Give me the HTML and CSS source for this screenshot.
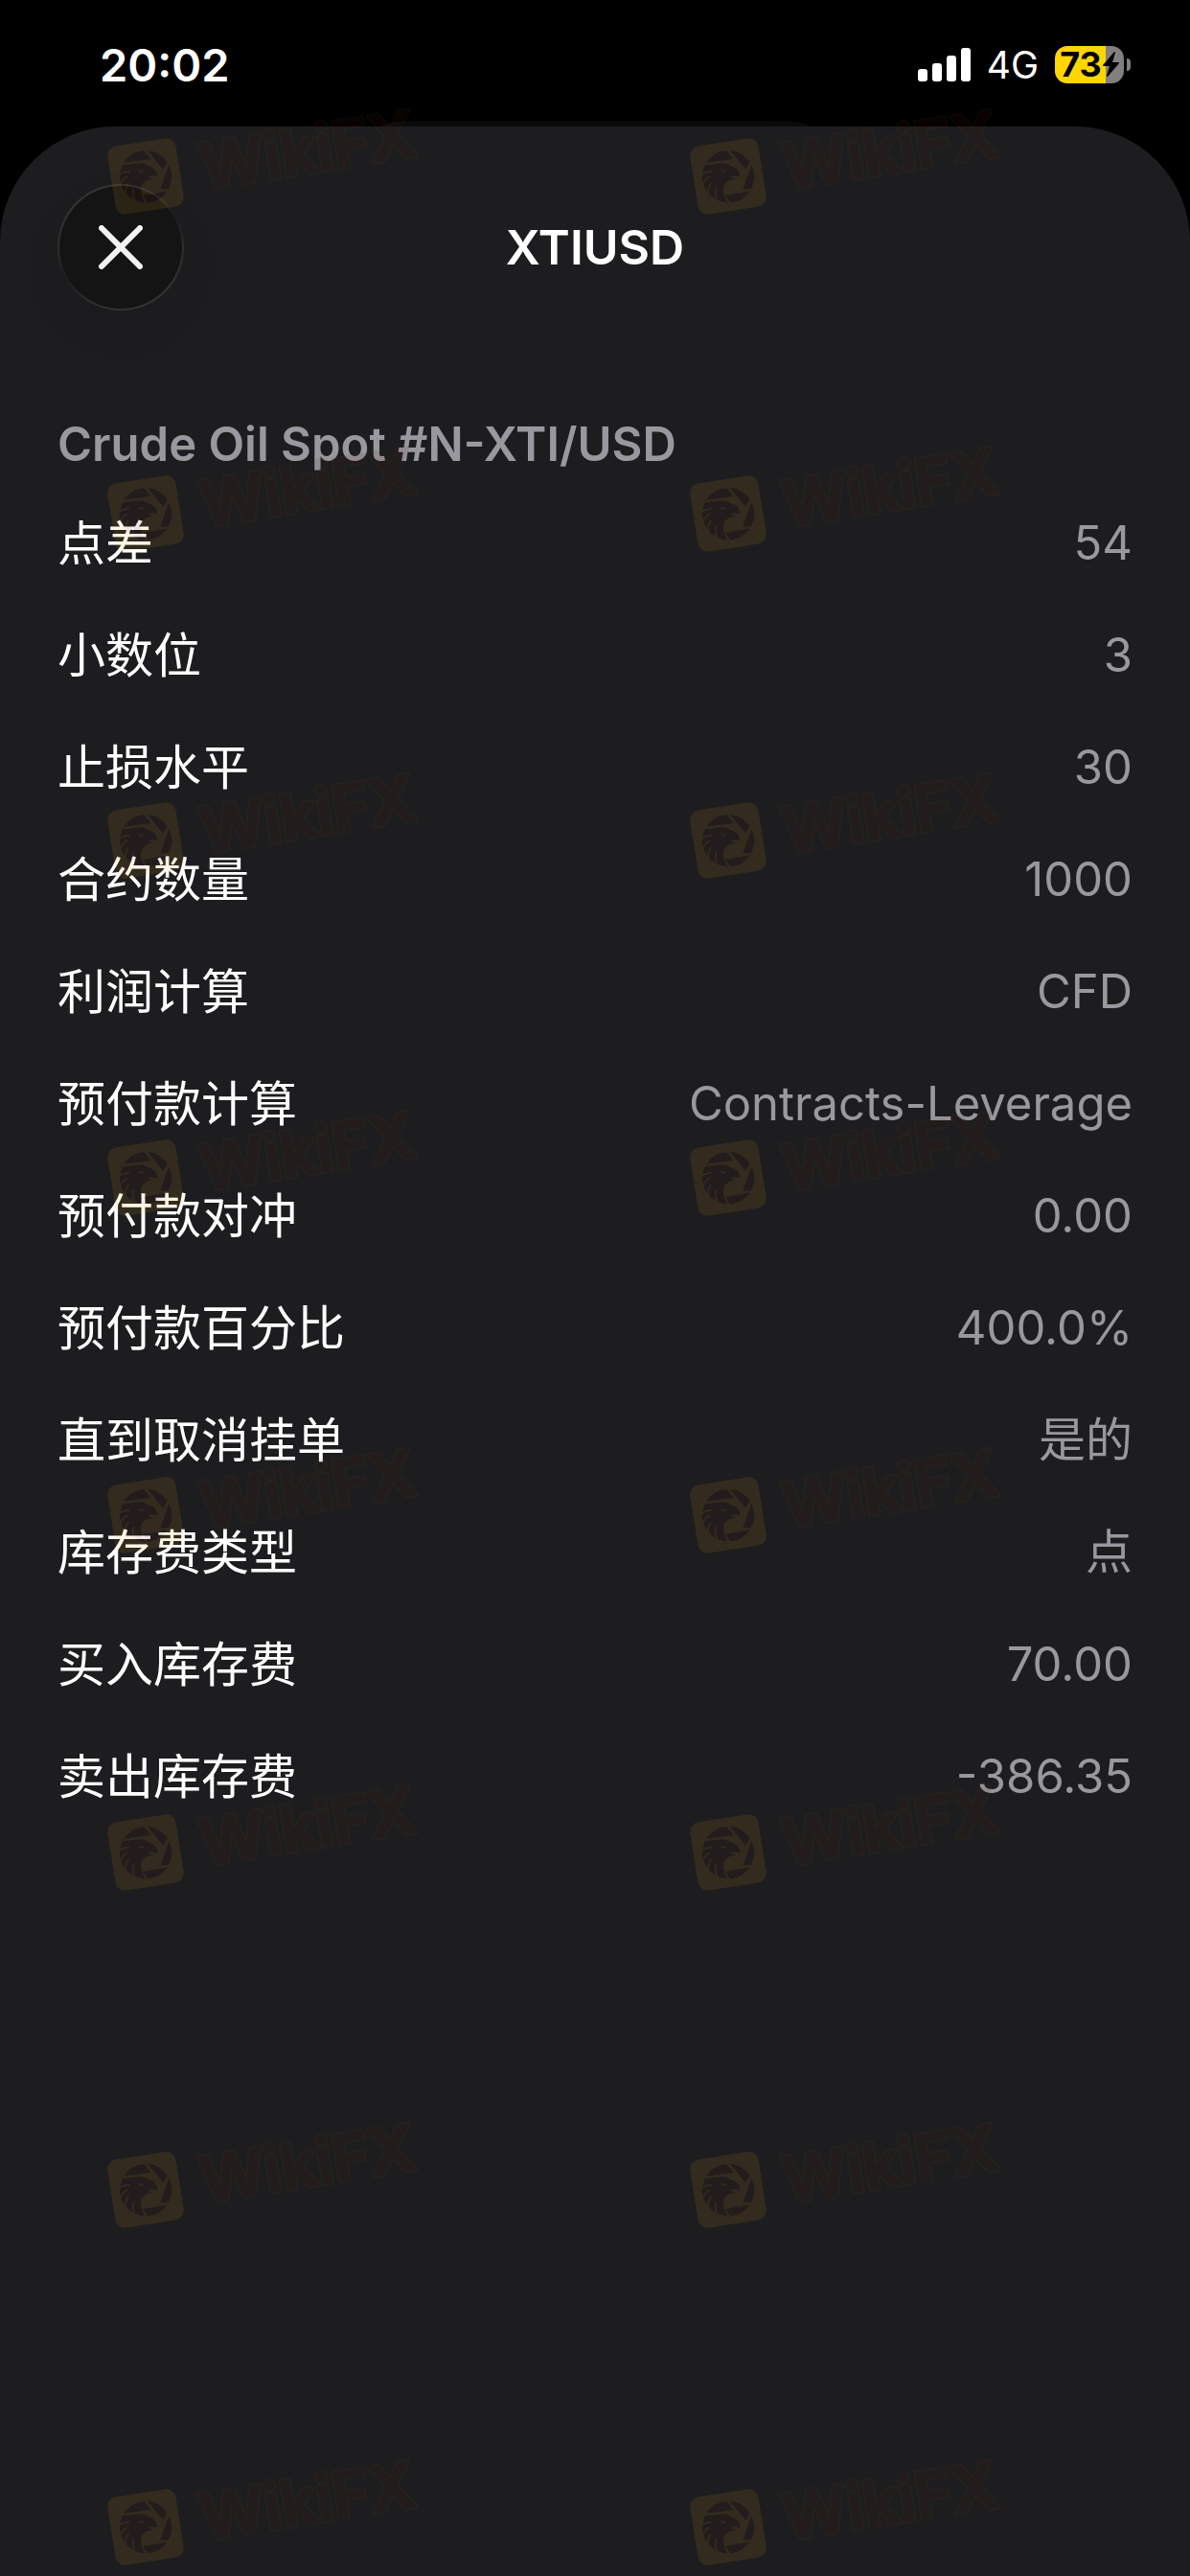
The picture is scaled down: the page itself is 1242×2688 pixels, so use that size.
FILE: index.html
```
<!DOCTYPE html>
<html lang="zh-CN">
<head>
    <meta charset="UTF-8">
    <meta name="viewport" content="width=device-width, initial-scale=1.0">
    <title>XTIUSD</title>
    <link rel="stylesheet" href="styles.css">
</head>
<body>
    <header class="status-bar">
        <span class="time">20:02</span>
        <div class="status-icons">
            <svg class="signal" viewBox="0 0 55 35" aria-hidden="true">
                <rect x="0" y="22" width="10" height="13" rx="3"/>
                <rect x="15" y="16" width="10" height="19" rx="3"/>
                <rect x="30" y="8" width="10" height="27" rx="3"/>
                <rect x="45" y="0" width="10" height="35" rx="3"/>
            </svg>
            <span class="network">4G</span>
            <div class="battery">
                <div class="battery-body">
                    <span>73</span>
                    <svg class="bolt" viewBox="0 0 17 26" aria-hidden="true">
                        <path d="M12 0 L0 14 Q0 15 1 15 H7 L4 25 Q4 26 5 26 L17 12 Q17 11 16 11 H10 L13 1 Q13 0 12 0 Z"/>
                    </svg>
                </div>
                <div class="battery-cap"></div>
            </div>
        </div>
    </header>

    <main class="sheet">
        <div class="sheet-header">
            <button class="close-button" type="button" aria-label="关闭">
                <svg viewBox="0 0 46 46" aria-hidden="true">
                    <path d="M3 3 L43 43 M43 3 L3 43"/>
                </svg>
            </button>
            <h1>XTIUSD</h1>
        </div>

        <h2>Crude Oil Spot #N-XTI/USD</h2>
        <dl class="specs">
            <div class="row"><dt>点差</dt><dd>54</dd></div>
            <div class="row"><dt>小数位</dt><dd>3</dd></div>
            <div class="row"><dt>止损水平</dt><dd>30</dd></div>
            <div class="row"><dt>合约数量</dt><dd>1000</dd></div>
            <div class="row"><dt>利润计算</dt><dd>CFD</dd></div>
            <div class="row"><dt>预付款计算</dt><dd>Contracts-Leverage</dd></div>
            <div class="row"><dt>预付款对冲</dt><dd>0.00</dd></div>
            <div class="row"><dt>预付款百分比</dt><dd>400.0%</dd></div>
            <div class="row"><dt>直到取消挂单</dt><dd>是的</dd></div>
            <div class="row"><dt>库存费类型</dt><dd>点</dd></div>
            <div class="row"><dt>买入库存费</dt><dd>70.00</dd></div>
            <div class="row"><dt>卖出库存费</dt><dd>-386.35</dd></div>
        </dl>
    </main>

    <!-- watermark, the first mark is reused by the others -->
    <div class="watermark" aria-hidden="true">
        <div class="mark-grid">
            <svg viewBox="-50 -100 352 150">
                <g id="mark">
                    <g transform="rotate(-9)">
                        <rect class="mark-tile" x="-36" y="-36" width="72" height="72" rx="10"/>
                        <g class="mark-outline"><text id="mark-text" x="58" y="23">WikiFX</text></g>
                        <use class="mark-text" href="#mark-text"/>
                    </g>
                    <g class="mark-bird" transform="translate(-47 -49) scale(0.333)">
                        <path d="M73 104 A82 82 0 0 1 136 66 L158 93 Z"/>
                        <path d="M147 66 A82 82 0 0 1 209 102 L196 125 Z"/>
                        <path d="M214 111 A82 82 0 0 1 213 187 L187 188 Z"/>
                        <path d="M132 207 L209 194 A82 82 0 0 1 148 230 Z"/>
                        <path d="M68 112 L125 106 Q142 107 148 115 Q170 118 177 138 L178 150 Q168 144 148 147 Q158 154 167 156 Q150 156 141 162 Q126 171 126 190 Q127 208 139 230 Q122 228 113 224 A82 82 0 0 1 60 138 Z"/>
                        <path class="mark-line" d="M58 142 Q72 132 90 132 M62 172 Q70 154 84 148 M78 202 Q77 180 88 168 M106 222 Q98 200 104 184"/>
                        <path class="mark-eye" d="M116 127 L136 129 Q126 140 116 127 Z"/>
                    </g>
                </g>
            </svg>
            <svg viewBox="-50 -100 352 150"><use href="#mark"/></svg>
            <svg viewBox="-50 -100 352 150"><use href="#mark"/></svg>
            <svg viewBox="-50 -100 352 150"><use href="#mark"/></svg>
        </div>
        <div class="mark-grid">
            <svg viewBox="-50 -100 352 150"><use href="#mark"/></svg>
            <svg viewBox="-50 -100 352 150"><use href="#mark"/></svg>
            <svg viewBox="-50 -100 352 150"><use href="#mark"/></svg>
            <svg viewBox="-50 -100 352 150"><use href="#mark"/></svg>
            <svg viewBox="-50 -100 352 150"><use href="#mark"/></svg>
            <svg viewBox="-50 -100 352 150"><use href="#mark"/></svg>
            <svg viewBox="-50 -100 352 150"><use href="#mark"/></svg>
            <svg viewBox="-50 -100 352 150"><use href="#mark"/></svg>
            <svg viewBox="-50 -100 352 150"><use href="#mark"/></svg>
            <svg viewBox="-50 -100 352 150"><use href="#mark"/></svg>
            <svg viewBox="-50 -100 352 150"><use href="#mark"/></svg>
            <svg viewBox="-50 -100 352 150"><use href="#mark"/></svg>
        </div>
    </div>
</body>
</html>
```

FILE: styles.css
```
* {
    box-sizing: border-box;
}

body {
    margin: 0;
    position: relative;
    display: flex;
    flex-direction: column;
    min-height: 100vh;
    background-color: #000;
    color: #fff;
    font-family: Inter, "Noto Sans CJK SC", sans-serif;
    overflow-x: hidden;
}

/* Status bar */
.status-bar {
    display: flex;
    justify-content: space-between;
    align-items: center;
    height: 132px;
    padding: 2px 62px 0 104px;
}

.time {
    font-size: 47px;
    font-weight: 600;
}

.status-icons {
    display: flex;
    align-items: center;
    gap: 17px;
}

.signal {
    width: 55px;
    height: 35px;
    fill: #fff;
}

.network {
    font-size: 39px;
}

.battery {
    display: flex;
    align-items: center;
    gap: 3px;
}

.battery-body {
    display: flex;
    align-items: center;
    justify-content: center;
    gap: 1px;
    width: 72px;
    height: 39px;
    border-radius: 13px;
    background: linear-gradient(to right, #ffd600 73%, #808080 73%);
    color: #000;
    font-size: 36px;
    font-weight: 700;
}

.bolt {
    width: 17px;
    height: 26px;
}

.battery-cap {
    width: 4px;
    height: 13px;
    border-radius: 0 6px 6px 0;
    background-color: #808080;
}

/* Sheet */
.sheet {
    position: relative;
    flex: 1;
    padding: 60px;
    border-radius: 120px 120px 0 0;
    background-color: #1d1d1f;
}

/* edge of the page lying behind the sheet */
.sheet::before {
    content: "";
    position: absolute;
    top: -6px;
    left: 32%;
    right: 32%;
    height: 6px;
    border-radius: 40px 40px 0 0 / 6px 6px 0 0;
    background-color: #0a0a0a;
}

.sheet-header {
    display: grid;
    grid-template-columns: 132px 1fr 132px;
    align-items: center;
}

.close-button {
    display: flex;
    align-items: center;
    justify-content: center;
    width: 132px;
    height: 132px;
    padding: 0;
    border: 2px solid transparent;
    border-radius: 50%;
    background: linear-gradient(#141414, #141414) padding-box,
        linear-gradient(150deg, #3a3a3b, #2c2c2d 35%, #1d1d1f 50%, #2c2c2d 65%, #3a3a3b) border-box;
    box-shadow: 0 20px 50px rgba(0, 0, 0, 0.06);
    cursor: pointer;
}

.close-button svg {
    width: 46px;
    height: 46px;
    fill: none;
    stroke: #f2f2f2;
    stroke-width: 6;
    stroke-linecap: round;
}

h1 {
    margin: 0;
    font-size: 50px;
    font-weight: 600;
    text-align: center;
}

h2 {
    margin: 110px 0 14px;
    color: #98989f;
    font-size: 49px;
    font-weight: 600;
    line-height: 60px;
}

.specs {
    margin: 0;
}

.row {
    display: flex;
    justify-content: space-between;
    align-items: center;
    height: 117px;
    font-size: 49px;
    line-height: 60px;
}

dt {
    font-size: 50px;
}

dd {
    margin: 0;
    color: #98989f;
}

/* Watermark */
.watermark {
    position: absolute;
    inset: 0;
    display: flex;
    flex-direction: column;
    gap: 191px;
    padding: 84px 0 0 102px;
    overflow: hidden;
    opacity: 0.1;
    pointer-events: none;
}

.mark-grid {
    display: grid;
    grid-template-columns: repeat(2, 352px);
    gap: 202px 256px;
}

.mark-grid svg {
    width: 352px;
    height: 150px;
    font-size: 66px;
    font-weight: 600;
    stroke-linejoin: round;
}

.mark-tile {
    fill: #eeae18;
}

.mark-outline {
    stroke: #585018;
    stroke-width: 5;
}

.mark-text {
    fill: #581612;
    stroke: #581612;
    stroke-width: 2;
}

.mark-bird {
    fill: #581612;
}

.mark-line {
    fill: none;
    stroke: #eeae18;
    stroke-width: 5;
}

.mark-eye {
    fill: #eeae18;
}
```
